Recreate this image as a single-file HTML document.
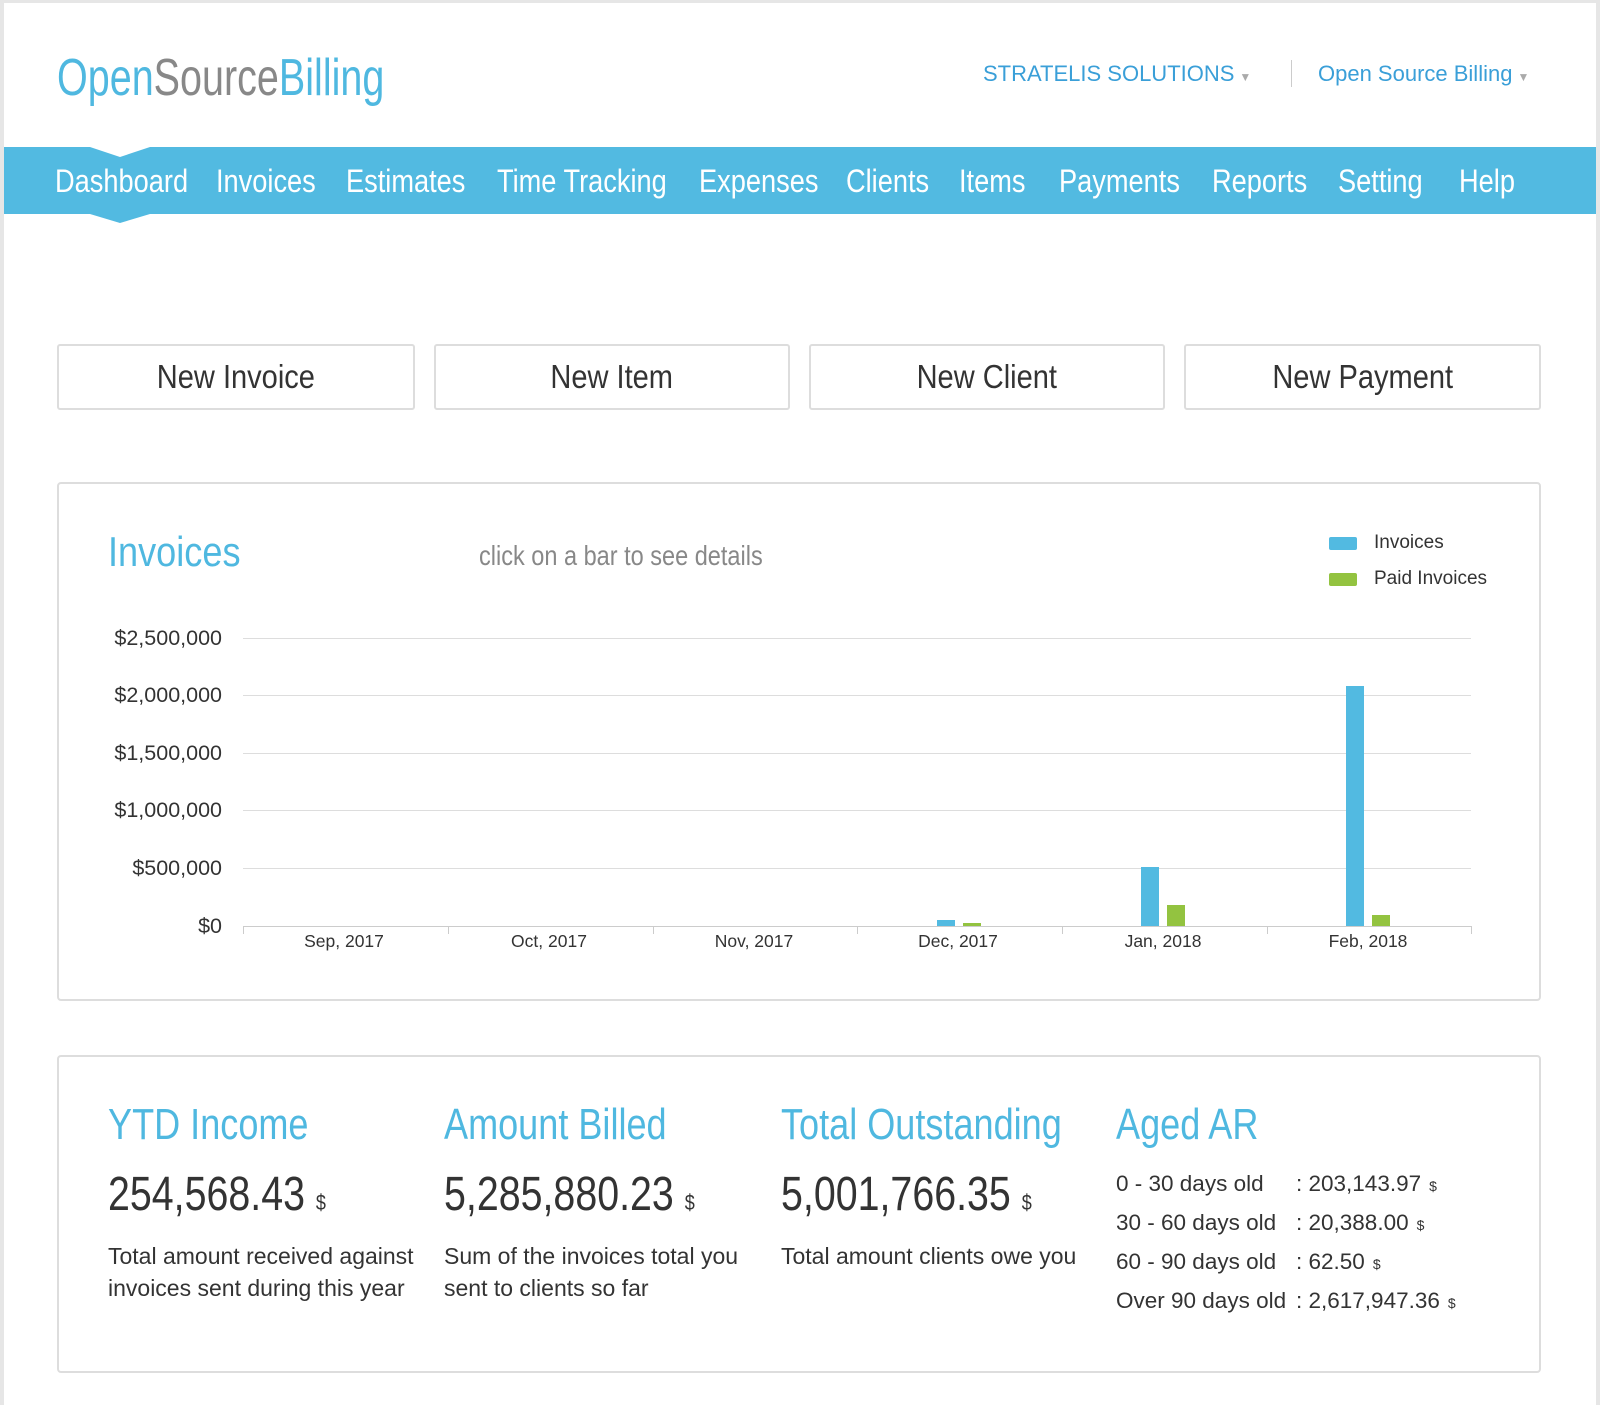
<!DOCTYPE html>
<html><head><meta charset="utf-8"><style>
*{margin:0;padding:0;box-sizing:border-box}
body{width:1600px;height:1405px;position:relative;background:#fff;font-family:"Liberation Sans",sans-serif;overflow:hidden}
.a{position:absolute;white-space:nowrap}
.c{transform:scaleX(.86);transform-origin:left center}
.nav span{position:absolute;top:164px;font-size:32px;color:#fff;line-height:34px;transform:scaleX(.85);transform-origin:left center}
.btn{position:absolute;top:344px;height:66px;border:2px solid #ddd;border-radius:3px;font-size:33px;color:#333;display:flex;align-items:center;justify-content:center}
.btn span{transform:scaleX(.88);display:inline-block}
.panel{position:absolute;left:57px;width:1484px;border:2px solid #ddd;border-radius:4px}
.yl{position:absolute;right:1378px;font-size:21.5px;color:#333}
.gl{position:absolute;left:243px;width:1228px;height:1px;background:#ddd}
.xl{position:absolute;top:931px;font-size:17.5px;color:#333;width:120px;text-align:center}
.tk{position:absolute;top:926px;width:1px;height:8px;background:#ccc}
.bar{position:absolute;width:18px}
.h{position:absolute;top:1100px;font-size:44px;color:#4fb8e0;line-height:50px;transform:scaleX(.82)}
.n{position:absolute;top:1168px;font-size:48px;color:#333;line-height:54px;transform:scaleX(.82)}
.n small{font-size:22px}
.d{position:absolute;top:1240px;font-size:23px;color:#333;line-height:32px}
.ar{position:absolute;left:1116px;font-size:22.5px;color:#333;line-height:28px;white-space:nowrap}
.ar b{font-weight:normal;position:absolute;left:180px;white-space:nowrap}
.ar small{font-size:14px;margin-left:8px}
</style></head><body>
<div class="a" style="left:0;top:0;width:1600px;height:3px;background:#e6e6e6"></div>
<div class="a" style="left:0;top:0;width:4px;height:1405px;background:#e6e6e6"></div>
<div class="a" style="left:1596px;top:0;width:4px;height:1405px;background:#e6e6e6"></div>

<div class="a c" style="left:57px;top:48px;font-size:52px;line-height:60px;color:#4fb8e0;transform:scaleX(.76)">Open<span style="color:#888">Source</span>Billing</div>

<div class="a" style="left:983px;top:61px;font-size:22px;color:#3a9fd8">STRATELIS SOLUTIONS<span style="color:#aaa;font-size:12px;margin-left:5px">▼</span></div>
<div class="a" style="left:1291px;top:60px;width:1px;height:27px;background:#ccc"></div>
<div class="a" style="left:1318px;top:61px;font-size:22px;color:#3a9fd8">Open Source Billing<span style="color:#aaa;font-size:12px;margin-left:5px">▼</span></div>

<div class="a" style="left:4px;top:147px;width:1592px;height:67px;background:#52bae1"></div>
<div class="a" style="left:90px;top:147px;width:0;height:0;border-left:30px solid transparent;border-right:30px solid transparent;border-top:10px solid #fff"></div>
<div class="a" style="left:90px;top:214px;width:0;height:0;border-left:30px solid transparent;border-right:30px solid transparent;border-top:9px solid #52bae1"></div>
<div class="nav">
<span style="left:55px">Dashboard</span><span style="left:216px">Invoices</span><span style="left:346px">Estimates</span><span style="left:497px">Time Tracking</span><span style="left:699px">Expenses</span><span style="left:846px">Clients</span><span style="left:959px">Items</span><span style="left:1059px">Payments</span><span style="left:1212px">Reports</span><span style="left:1338px">Setting</span><span style="left:1459px">Help</span>
</div>

<div class="btn" style="left:57px;width:358px"><span>New Invoice</span></div>
<div class="btn" style="left:434px;width:356px"><span>New Item</span></div>
<div class="btn" style="left:809px;width:356px"><span>New Client</span></div>
<div class="btn" style="left:1184px;width:357px"><span>New Payment</span></div>

<div class="panel" style="top:482px;height:519px"></div>
<div class="a c" style="left:108px;top:528px;font-size:42px;color:#4fb8e0;line-height:48px">Invoices</div>
<div class="a c" style="left:479px;top:540px;font-size:28px;color:#888;line-height:32px;transform:scaleX(.84)">click on a bar to see details</div>
<div class="a" style="left:1329px;top:537px;width:28px;height:13px;background:#52bae1;border-radius:2px"></div>
<div class="a" style="left:1329px;top:573px;width:28px;height:13px;background:#93c340;border-radius:2px"></div>
<div class="a" style="left:1374px;top:532px;font-size:19px;color:#333">Invoices</div>
<div class="a" style="left:1374px;top:568px;font-size:19px;color:#333">Paid Invoices</div>

<div class="gl" style="top:638px"></div><div class="gl" style="top:695px"></div><div class="gl" style="top:753px"></div><div class="gl" style="top:810px"></div><div class="gl" style="top:868px"></div><div class="gl" style="top:926px;background:#ccc"></div>
<div class="yl" style="top:626px">$2,500,000</div>
<div class="yl" style="top:683px">$2,000,000</div>
<div class="yl" style="top:741px">$1,500,000</div>
<div class="yl" style="top:798px">$1,000,000</div>
<div class="yl" style="top:856px">$500,000</div>
<div class="yl" style="top:914px">$0</div>
<div class="tk" style="left:243px"></div><div class="tk" style="left:448px"></div><div class="tk" style="left:653px"></div><div class="tk" style="left:857px"></div><div class="tk" style="left:1062px"></div><div class="tk" style="left:1267px"></div><div class="tk" style="left:1471px"></div>
<div class="xl" style="left:284px">Sep, 2017</div>
<div class="xl" style="left:489px">Oct, 2017</div>
<div class="xl" style="left:694px">Nov, 2017</div>
<div class="xl" style="left:898px">Dec, 2017</div>
<div class="xl" style="left:1103px">Jan, 2018</div>
<div class="xl" style="left:1308px">Feb, 2018</div>
<div class="bar" style="left:937px;top:920px;height:6px;background:#52bae1"></div>
<div class="bar" style="left:963px;top:923px;height:3px;background:#93c340"></div>
<div class="bar" style="left:1141px;top:867px;height:59px;background:#52bae1"></div>
<div class="bar" style="left:1167px;top:905px;height:21px;background:#93c340"></div>
<div class="bar" style="left:1346px;top:686px;height:240px;background:#52bae1"></div>
<div class="bar" style="left:1372px;top:915px;height:11px;background:#93c340"></div>

<div class="panel" style="top:1055px;height:318px"></div>
<div class="h a" style="left:108px;transform-origin:left center">YTD Income</div>
<div class="h a" style="left:444px;transform-origin:left center">Amount Billed</div>
<div class="h a" style="left:781px;transform-origin:left center">Total Outstanding</div>
<div class="h a" style="left:1116px;transform-origin:left center">Aged AR</div>
<div class="n a" style="left:108px;transform-origin:left center">254,568.43 <small>$</small></div>
<div class="n a" style="left:444px;transform-origin:left center">5,285,880.23 <small>$</small></div>
<div class="n a" style="left:781px;transform-origin:left center">5,001,766.35 <small>$</small></div>
<div class="d" style="left:108px">Total amount received against<br>invoices sent during this year</div>
<div class="d" style="left:444px">Sum of the invoices total you<br>sent to clients so far</div>
<div class="d" style="left:781px">Total amount clients owe you</div>
<div class="ar" style="top:1170px">0 - 30 days old<b>: 203,143.97<small>$</small></b></div>
<div class="ar" style="top:1209px">30 - 60 days old<b>: 20,388.00<small>$</small></b></div>
<div class="ar" style="top:1248px">60 - 90 days old<b>: 62.50<small>$</small></b></div>
<div class="ar" style="top:1287px">Over 90 days old<b>: 2,617,947.36<small>$</small></b></div>
</body></html>
